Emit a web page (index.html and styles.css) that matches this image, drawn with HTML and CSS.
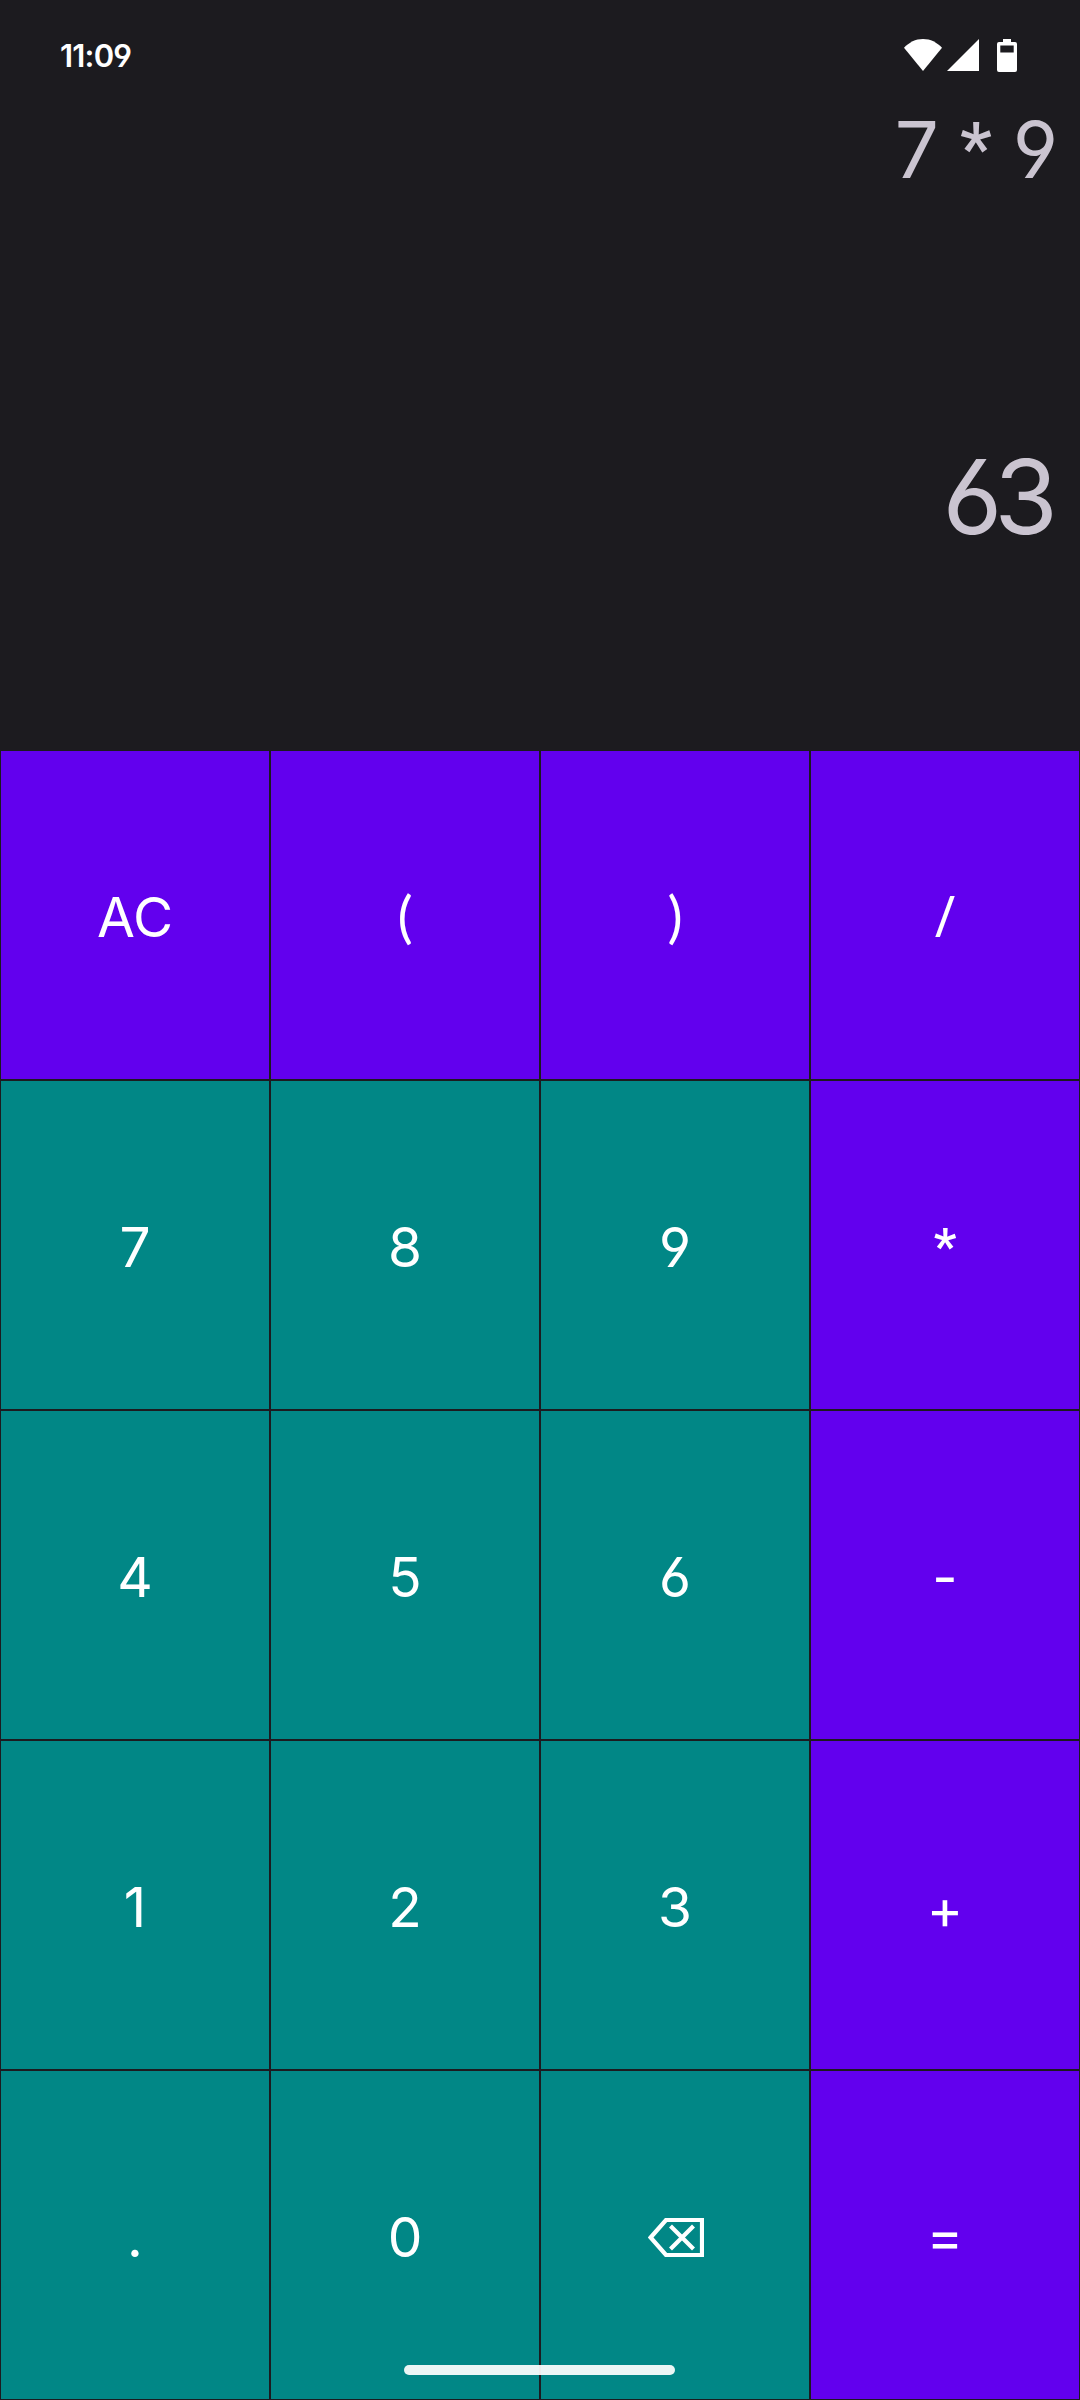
FILE: index.html
```
<!DOCTYPE html>
<html lang="en">
<head>
<meta charset="utf-8">
<title>Calculator</title>
<link rel="stylesheet" href="styles.css">
</head>
<body>
<main class="screen">
  <header class="status">
    <span class="clock">11:09</span>
    <div class="status-icons">
      <svg class="wifi" width="38" height="32" viewBox="0 0 38 32"><path d="M0 8.800C5 3.400 11.500 0 19 0s14 3.400 19 8.800L19 32Z"/></svg>
      <svg class="signal" width="32" height="32" viewBox="0 0 32 32"><path d="M32 0v32H0Z"/></svg>
      <svg class="battery" width="20" height="33" viewBox="0 0 20 33"><path fill-rule="evenodd" d="M6 0h8v3h4a2 2 0 0 1 2 2v26a2 2 0 0 1-2 2H2a2 2 0 0 1-2-2V5a2 2 0 0 1 2-2h4ZM3.300 6.500v7h13.400v-7Z"/></svg>
    </div>
  </header>
  <section class="display">
    <div class="expression">7 <span class="star">*</span> 9</div>
    <div class="result">63</div>
  </section>
  <section class="keypad">
    <button class="key op"><span class="label">AC</span></button>
    <button class="key op"><span class="label"><span class="paren">(</span></span></button>
    <button class="key op"><span class="label"><span class="paren">)</span></span></button>
    <button class="key op"><span class="label"><span class="slash">/</span></span></button>
    <button class="key"><span class="label">7</span></button>
    <button class="key"><span class="label">8</span></button>
    <button class="key"><span class="label">9</span></button>
    <button class="key op"><span class="label"><span class="star">*</span></span></button>
    <button class="key"><span class="label">4</span></button>
    <button class="key"><span class="label">5</span></button>
    <button class="key"><span class="label">6</span></button>
    <button class="key op"><span class="label">-</span></button>
    <button class="key"><span class="label">1</span></button>
    <button class="key"><span class="label">2</span></button>
    <button class="key"><span class="label">3</span></button>
    <button class="key op plus"><span class="label">+</span></button>
    <button class="key"><span class="label">.</span></button>
    <button class="key"><span class="label">0</span></button>
    <button class="key" aria-label="Backspace"><svg class="backspace" width="56" height="39" viewBox="0 0 56 39"><path d="M2.600 19.500 18 2h36v35H18Z M22.500 8 45.500 31 M45.500 8 22.500 31"/></svg></button>
    <button class="key op equals"><span class="label">=</span></button>
  </section>
  <div class="home-bar"></div>
</main>
</body>
</html>
```
FILE: styles.css
```
* {
  box-sizing: border-box;
}

body {
  margin: 0;
  background: #1c1b1f;
  font-family: Inter, sans-serif;
  font-feature-settings: "cv03", "cv04";
}

.screen {
  position: relative;
  display: flex;
  flex-direction: column;
  width: 1080px;
  height: 2400px;
}

.status {
  display: flex;
  justify-content: space-between;
  height: 110px;
  padding: 39px 63px 0 60px;
}

.clock {
  color: #fff;
  font-size: 31px;
  font-weight: 600;
  line-height: 33px;
  letter-spacing: -0.8px;
}

.status-icons {
  display: flex;
  align-items: flex-start;
  fill: #fff;
}

.signal {
  margin-left: 5px;
}

.battery {
  margin-left: 18px;
}

.display {
  display: flex;
  flex-direction: column;
  align-items: flex-end;
  height: 640px;
  padding-right: 22px;
  color: #cac4d0;
}

.expression {
  height: 80px;
  font-size: 78px;
  line-height: 80px;
  word-spacing: -1px;
  white-space: nowrap;
}

.result {
  margin-top: 257px;
  font-size: 103px;
  line-height: 100px;
  letter-spacing: -8px;
  padding-right: 8px;
}

.keypad {
  display: grid;
  flex: 1;
  grid-template-columns: repeat(4, 1fr);
  grid-template-rows: repeat(5, 1fr);
}

.key {
  display: flex;
  align-items: center;
  justify-content: center;
  margin: 0;
  padding: 4px 0 0;
  border: 1px solid #1c1b1f;
  background: #018786;
  color: #fff;
  font: inherit;
  font-feature-settings: inherit;
}

.op {
  background: #6200ee;
}

.plus {
  padding-top: 8px;
}

.equals {
  padding-top: 1px;
}

.label {
  font-size: 55px;
  line-height: 66px;
}

.paren {
  font-family: Lato, sans-serif;
  font-size: 57px;
  line-height: 0;
}

.slash {
  font-family: "Open Sans", sans-serif;
  font-size: 56px;
  line-height: 0;
}

.star {
  font-family: Roboto, sans-serif;
  font-size: 0.92em;
  font-weight: 500;
  line-height: 0;
  vertical-align: 0.05em;
}

.key .star {
  font-weight: 600;
}

.backspace {
  margin-left: 2px;
  fill: none;
  stroke: #fff;
  stroke-width: 4.2;
}

.home-bar {
  position: absolute;
  bottom: 25px;
  left: 404px;
  width: 271px;
  height: 10px;
  border-radius: 5px;
  background: rgba(255, 255, 255, 0.92);
}
```
